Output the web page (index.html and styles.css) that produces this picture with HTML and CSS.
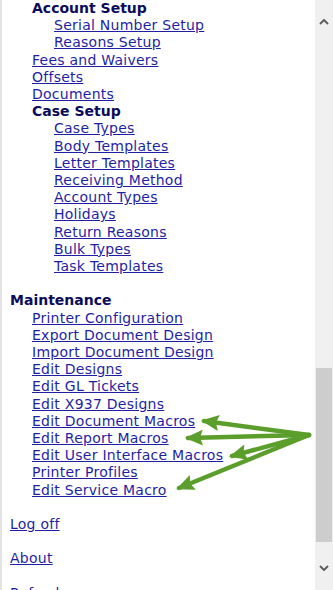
FILE: index.html
```html
<!DOCTYPE html>
<html lang="en">
<head>
  <meta charset="UTF-8" />
  <meta name="viewport" content="width=device-width, initial-scale=1.0"/>
  <title>Menu</title>
  <link rel="stylesheet" href="styles.css">
</head>
<body>
  <div class="page">
    <div class="nav">
      <ul class="tree sub">
        <li>
          <span class="head">Account Setup</span>
          <ul class="tree sub">
            <li><a href="#">Serial Number Setup</a></li>
            <li><a href="#">Reasons Setup</a></li>
          </ul>
        </li>
        <li><a href="#">Fees and Waivers</a></li>
        <li><a href="#">Offsets</a></li>
        <li><a href="#">Documents</a></li>
        <li>
          <span class="head">Case Setup</span>
          <ul class="tree sub">
            <li><a href="#">Case Types</a></li>
            <li><a href="#">Body Templates</a></li>
            <li><a href="#">Letter Templates</a></li>
            <li><a href="#">Receiving Method</a></li>
            <li><a href="#">Account Types</a></li>
            <li><a href="#">Holidays</a></li>
            <li><a href="#">Return Reasons</a></li>
            <li><a href="#">Bulk Types</a></li>
            <li><a href="#">Task Templates</a></li>
          </ul>
        </li>
      </ul>

      <div class="group">
        <span class="head">Maintenance</span>
        <ul class="tree sub">
          <li><a href="#">Printer Configuration</a></li>
          <li><a href="#">Export Document Design</a></li>
          <li><a href="#">Import Document Design</a></li>
          <li><a href="#">Edit Designs</a></li>
          <li><a href="#">Edit GL Tickets</a></li>
          <li><a href="#">Edit X937 Designs</a></li>
          <li><a href="#">Edit Document Macros</a></li>
          <li><a href="#">Edit Report Macros</a></li>
          <li><a href="#">Edit User Interface Macros</a></li>
          <li><a href="#">Printer Profiles</a></li>
          <li><a href="#">Edit Service Macro</a></li>
        </ul>
      </div>

      <p class="group"><a href="#">Log off</a></p>
      <p class="group"><a href="#">About</a></p>
      <p class="group"><a href="#">Refresh</a></p>
    </div>

    <div class="scrollbar">
      <div class="sb-btn">
        <svg width="10" height="6" viewBox="0 0 10 6"><polyline points="1,5 5,1 9,5" /></svg>
      </div>
      <div class="track"><div class="thumb"></div></div>
      <div class="sb-btn">
        <svg width="10" height="6" viewBox="0 0 10 6"><polyline points="1,1 5,5 9,1" /></svg>
      </div>
    </div>
  </div>

  <!-- green callout arrows drawn over the menu -->
  <svg class="callouts" width="333" height="590" viewBox="0 0 333 590">
    <defs>
      <marker id="head" markerUnits="userSpaceOnUse" markerWidth="18" markerHeight="16" refX="15" refY="8" orient="auto">
        <polygon points="0,0 18,8 0,16 3,8" fill="#5c9e2c" />
      </marker>
    </defs>
    <g stroke="#5c9e2c" stroke-width="4.5" stroke-linecap="round" fill="none" marker-end="url(#head)">
      <line x1="309" y1="435" x2="204" y2="421" />
      <line x1="309" y1="435" x2="188" y2="438" />
      <line x1="309" y1="435" x2="232" y2="456" />
      <line x1="309" y1="435" x2="179" y2="488" />
    </g>
  </svg>
</body>
</html>
```

FILE: styles.css
```css
:root {
  --link: #1f1fa3;
  --head: #0b0b5c;
  --line: 17.2px;
}
body {
  margin: 0;
  font-family: "DejaVu Sans", Verdana, sans-serif;
  font-size: 14px;
  line-height: var(--line);
  background: #fff;
  overflow: hidden;
  position: relative;
}
.page {
  display: flex;
  height: 590px;
}
.nav {
  flex: 1;
  border-left: 2px solid #e4e4e4;
  padding-left: 8px;
}
.tree {
  list-style: none;
  margin: 0;
  padding: 0;
}
.tree.sub {
  padding-left: 22px;
}
a {
  color: var(--link);
  text-decoration: underline;
  letter-spacing: 0.25px;
}
.head {
  font-weight: bold;
  color: var(--head);
}
.group {
  margin: var(--line) 0 0;
}
.scrollbar {
  width: 18px;
  background: #f0f0f0;
  display: flex;
  flex-direction: column;
}
.sb-btn {
  height: 44px;
  display: flex;
  align-items: center;
  justify-content: center;
}
.sb-btn svg polyline {
  fill: none;
  stroke: #606060;
  stroke-width: 2;
}
.track {
  flex: 1;
  display: flex;
  flex-direction: column;
  justify-content: flex-end;
  padding: 0 1px 4px 1px;
}
.thumb {
  height: 174px;
  background: #cdcdcd;
}
.callouts {
  position: absolute;
  top: 0;
  left: 0;
  pointer-events: none;
}
```
